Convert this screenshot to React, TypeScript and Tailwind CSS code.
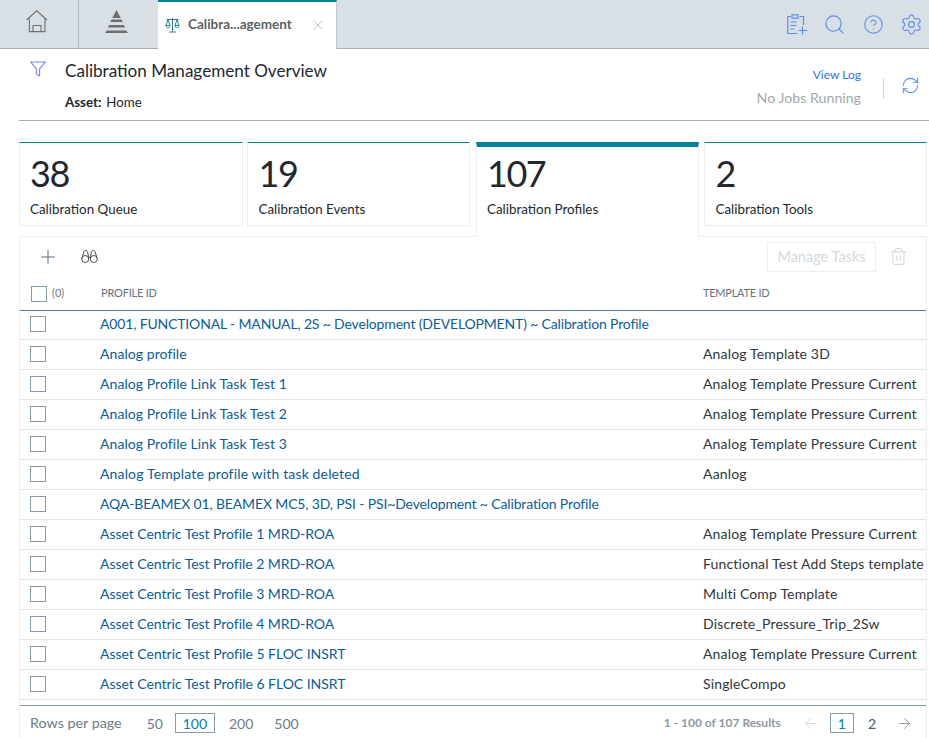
import { Plus, Search, X, ArrowLeft, ArrowRight, CircleHelp, Settings, RefreshCw, Trash2 } from 'lucide-react';

// tracking is per row, the screenshot's hinted text doesn't have Lato's natural widths
const ROWS = [
  ['A001, FUNCTIONAL - MANUAL, 2S ~ Development (DEVELOPMENT) ~ Calibration Profile', '', 'tracking-[-0.16px]'],
  ['Analog profile', 'Analog Template 3D', 'tracking-[0.07px]'],
  ['Analog Profile Link Task Test 1', 'Analog Template Pressure Current', 'tracking-[0.06px]'],
  ['Analog Profile Link Task Test 2', 'Analog Template Pressure Current', 'tracking-[0.06px]'],
  ['Analog Profile Link Task Test 3', 'Analog Template Pressure Current', 'tracking-[0.06px]'],
  ['Analog Template profile with task deleted', 'Aanlog', 'tracking-[0.15px]'],
  ['AQA-BEAMEX 01, BEAMEX MC5, 3D, PSI - PSI~Development ~ Calibration Profile', '', 'tracking-[-0.15px]'],
  ['Asset Centric Test Profile 1 MRD-ROA', 'Analog Template Pressure Current', 'tracking-[-0.04px]'],
  ['Asset Centric Test Profile 2 MRD-ROA', 'Functional Test Add Steps template', 'tracking-[-0.04px]'],
  ['Asset Centric Test Profile 3 MRD-ROA', 'Multi Comp Template', 'tracking-[-0.04px]'],
  ['Asset Centric Test Profile 4 MRD-ROA', 'Discrete_Pressure_Trip_2Sw', 'tracking-[-0.04px]'],
  ['Asset Centric Test Profile 5 FLOC INSRT', 'Analog Template Pressure Current', 'tracking-[-0.03px]'],
  ['Asset Centric Test Profile 6 FLOC INSRT', 'SingleCompo', 'tracking-[-0.03px]'],
];

const CARDS = [
  { value: '38', label: 'Calibration Queue' },
  { value: '19', label: 'Calibration Events' },
  { value: '107', label: 'Calibration Profiles', active: true },
  { value: '2', label: 'Calibration Tools' },
];

function HomeIcon() {
  return (
    <svg width="22" height="23" viewBox="0 0 22 23" fill="none" stroke="#6f6f6f" strokeWidth="1.1">
      <path d="M0.5 10 L10.7 0.8 L21 10" />
      <path d="M3.4 8.5 V21.6 H19 V8.5" />
      <path d="M7 21.6 V15.5 H15 V21.6" />
    </svg>
  );
}

function PyramidIcon() {
  return (
    <svg width="23" height="23" viewBox="0 0 23 23" fill="#6f6f6f">
      <path d="M11.5 0 L15.8 8 H7.2 Z" />
      <path d="M6.4 9.5 H16.6 L17.7 12 H5.3 Z" />
      <path d="M4.1 15 H18.9 L20 17.5 H3 Z" />
      <path d="M1.9 20.5 H21.1 L23 23 H0 Z" />
    </svg>
  );
}

function ScaleIcon() {
  return (
    <svg width="15" height="16" viewBox="0 0 15 16" fill="none" stroke="#2f7f86" strokeWidth="1">
      <path d="M7.5 1 V14.5 M4 15 H11 M1.5 2.5 H13.5" />
      <path d="M3 2.5 L1 8.5 H5 Z M12 2.5 L10 8.5 H14 Z" />
      <path d="M1 8.5 C1 11.5 5 11.5 5 8.5 M10 8.5 C10 11.5 14 11.5 14 8.5" />
    </svg>
  );
}

function NewReportIcon() {
  return (
    <svg width="21" height="21" viewBox="0 0 21 21" fill="none" stroke="#5b8def" strokeWidth="1.2">
      <path d="M4 2.5 H0.8 V19.5 H10.5" />
      <path d="M12.5 2.5 H16.5 V11" />
      <rect x="5" y="0.8" width="6" height="3.4" />
      <path d="M3.5 8 H9.5 M3.5 11.5 H9.5 M3.5 15 H7.5" />
      <path d="M15.5 12.5 V20.5 M11.5 16.5 H20.5" />
    </svg>
  );
}

function FunnelIcon() {
  return (
    <svg width="16" height="16" viewBox="0 0 16 16" fill="none" stroke="#7d86ea" strokeWidth="1.1">
      <path d="M0.7 1 H15.3 L9.6 7.8 V15 L6.4 13 V7.8 Z" />
    </svg>
  );
}

function BinocularsIcon() {
  return (
    <svg width="17" height="15" viewBox="0 0 17 15" fill="none" stroke="#4b4f54" strokeWidth="1">
      <circle cx="4.2" cy="10" r="3.5" />
      <circle cx="12.8" cy="10" r="3.5" />
      <path d="M1 9 L3 2.5 C3.4 1 6 1 6.6 2.5 L7.6 8.5 M16 9 L14 2.5 C13.6 1 11 1 10.4 2.5 L9.4 8.5" />
      <path d="M7.6 8.5 H9.4" />
    </svg>
  );
}

function Check({ className }: { className?: string }) {
  return <span className={`block w-4 h-4 border border-[#8a9ba8] bg-white ${className ?? ''}`} />;
}

export default function App() {
  return (
    <div className="w-[929px] h-[738px] overflow-hidden bg-white font-['Lato',sans-serif] text-[14px] text-[#22282e]">
      <div className="flex h-[49px] bg-[#d8dfe5] border-b border-[#a9adb1]">
        <div className="w-[79px] flex items-center justify-center border-r border-[#b5babe] pr-[5px] pb-[5px]">
          <HomeIcon />
        </div>
        <div className="w-[79px] flex items-center justify-center pr-[4px] pb-[5px]">
          <PyramidIcon />
        </div>
        <div className="w-[179px] h-[49px] flex items-center bg-white border-t-2 border-t-[#00819d] border-r border-r-[#c4c9cd] pl-[7px] pb-[2px]">
          <ScaleIcon />
          <span className="ml-[8px] font-bold text-[13.5px] text-[#5c5f62]">Calibra...agement</span>
          <X size={16} strokeWidth={1.1} className="ml-[18px] text-[#a9adb1]" />
        </div>
        <div className="ml-auto flex items-center pr-[6px] text-[#5b8def]">
          <NewReportIcon />
          <Search size={23} strokeWidth={1.2} className="ml-[15px]" />
          <CircleHelp size={21} strokeWidth={1.2} className="ml-[17px]" />
          <Settings size={23} strokeWidth={1.2} className="ml-[16px]" />
        </div>
      </div>

      <div className="ml-[19px] h-[72px] flex border-b border-[#a9adb1]">
        <div className="pl-[11px] pt-[12px]">
          <FunnelIcon />
        </div>
        <div className="pl-[19px] pt-[10px]">
          <div className="text-[17.1px] leading-[24px] text-[#22282e]">Calibration Management Overview</div>
          <div className="mt-[10px] text-[13.3px] leading-[18px]">
            <span className="font-bold">Asset:</span>
            <span className="ml-[5px]">Home</span>
          </div>
        </div>
        <div className="ml-auto pt-[17px] text-right">
          <div className="text-[12px] leading-[18px] text-[#2f6fe0]">View Log</div>
          <div className="mt-[5px] text-[14.2px] leading-[18px] text-[#a3a8ac]">No Jobs Running</div>
        </div>
        <div className="ml-[22px] mt-[29px] w-px h-[21px] bg-[#cfd3d6]" />
        <div className="pl-[17px] pr-[9px] pt-[27px] text-[#5b8def]">
          <RefreshCw size={19} strokeWidth={1.3} />
        </div>
      </div>

      <div className="ml-[19px] mr-[2px] mt-[21px] flex h-[95px] items-start">
        {CARDS.map((c, i) => (
          <div
            key={c.label}
            className={
              c.active
                ? 'w-[223px] h-[95px] ml-[6px] mr-[5px] relative z-10 bg-white border-x border-[#eceeef] border-t-[5px] border-t-[#00819d] pl-[10px]'
                : `w-[224px] h-[84px] border border-[#eceeef] border-t-[#00819d] ${i === 1 ? 'ml-[4px] pl-[11px]' : i === 3 ? 'pl-[11px]' : 'pl-[10px]'}`
            }
          >
            <div className={`text-[36px] tracking-[-1.5px] leading-[44px] text-[#22282e] ${c.active ? 'mt-[4px]' : 'mt-[8px]'}`}>{c.value}</div>
            <div className="mt-[4px] text-[13.4px] leading-[20px]">{c.label}</div>
          </div>
        ))}
      </div>

      <div className="ml-[19px] mr-[2px] -mt-[1px] h-[503px] border border-[#eceeef] flex flex-col">
        <div className="h-[41px] flex items-center shrink-0 pb-[2px]">
          <Plus size={22} strokeWidth={1.1} className="ml-[17px] text-[#5f7080]" />
          <span className="ml-[22px]"><BinocularsIcon /></span>
          <button className="ml-auto w-[109px] h-[30px] border border-[#eceeef] text-[14.5px] text-[#d5d9dc]">Manage Tasks</button>
          <Trash2 size={19} strokeWidth={1} className="ml-[13px] mr-[18px] text-[#c6cbcf]" />
        </div>
        <div className="h-[33px] shrink-0 flex items-center border-b border-[#5f7786] pb-[1px]">
          <Check className="ml-[11px]" />
          <span className="ml-[5px] w-[49px] text-[11px] text-[#6f7a83]">(0)</span>
          <span className="w-[602px] text-[11px] tracking-[-0.2px] text-[#66727c]">PROFILE ID</span>
          <span className="text-[11px] tracking-[-0.25px] text-[#66727c]">TEMPLATE ID</span>
        </div>
        <div className="-mt-px">
          {ROWS.map(([profile, template, tracking]) => (
            <div key={profile} className="h-[30px] flex items-center border-b border-[#e2e4e6] pb-[2px]">
              <Check className="ml-[10px]" />
              <span className={`ml-[54px] w-[603px] shrink-0 text-[14px] text-[#0b5c97] whitespace-nowrap ${tracking}`}>{profile}</span>
              <span className="text-[14px] tracking-[0.16px] text-[#30363b] whitespace-nowrap">{template}</span>
            </div>
          ))}
        </div>
        <div className="mt-[5px] flex-1 flex items-center border-t border-[#8a9ba8] pt-[2px] text-[14px] text-[#6f7a83]">
          <span className="ml-[10px] text-[14.3px]">Rows per page</span>
          <span className="ml-[25px]">50</span>
          <span className="ml-[12px] w-[40px] h-[20px] border border-[#8a9ba8] text-[#0b7ea3] flex items-center justify-center">100</span>
          <span className="ml-[14px]">200</span>
          <span className="ml-[21px]">500</span>
          <span className="ml-auto text-[12px] font-bold text-[#8f979e]">1 - 100 of 107 Results</span>
          <ArrowLeft size={17} strokeWidth={1} className="ml-[21px] text-[#c6cbcf]" />
          <span className="ml-[11px] w-[24px] h-[20px] border border-[#8a9ba8] text-[#0b7ea3] flex items-center justify-center">1</span>
          <span className="ml-[14px] text-[#4f5b64]">2</span>
          <ArrowRight size={17} strokeWidth={1} className="ml-[20px] mr-[13px] text-[#6f7a83]" />
        </div>
      </div>
    </div>
  );
}
